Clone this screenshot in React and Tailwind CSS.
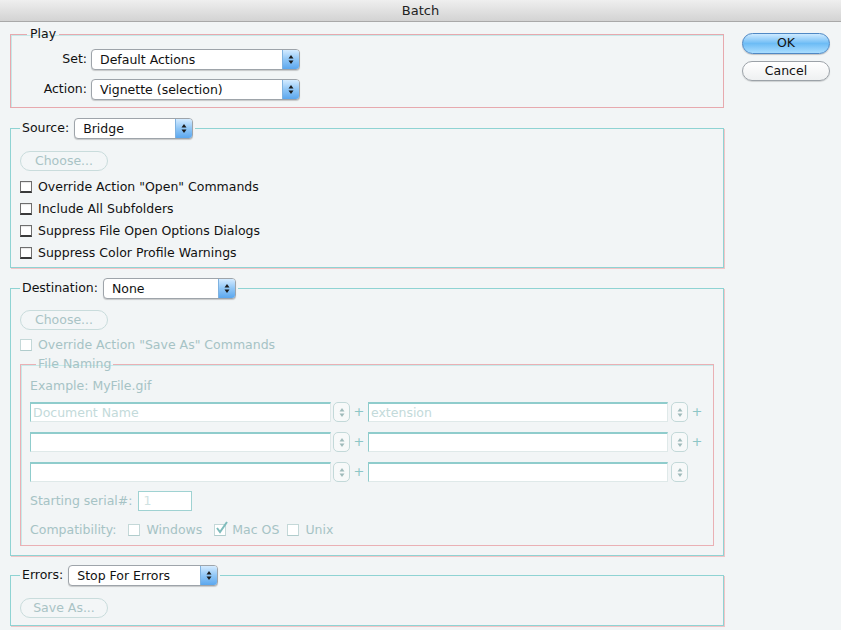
import React from 'react';

const FONT = { fontFamily: '"DejaVu Sans", "Liberation Sans", sans-serif' };

function Arrows({ color = '#1a1a1a' }) {
  return (
    <svg width="6" height="11" viewBox="0 0 6 11">
      <path d="M3 1 L5.5 4.5 L0.5 4.5 Z" fill={color} />
      <path d="M3 10 L5.5 6.5 L0.5 6.5 Z" fill={color} />
    </svg>
  );
}

function Select({ value, width }) {
  return (
    <div className={`flex h-[21px] ${width} overflow-hidden rounded-[4px] border border-[#9ea4aa] bg-white shadow-[0_1px_1px_rgba(0,0,0,0.18)]`}>
      <span className="flex-1 pl-[8px] text-[12.5px] leading-[19px] text-[#111]">{value}</span>
      <span className="flex w-[17px] items-center justify-center border-l border-[#7fb2e0] bg-gradient-to-b from-[#d4ebff] via-[#8fc6f6] to-[#5ba7ee]">
        <Arrows />
      </span>
    </div>
  );
}

function PillButton({ children, disabled, primary }) {
  if (primary) {
    return (
      <div className="flex h-[21px] w-[88px] items-center justify-center rounded-full border border-[#4f88c4] bg-gradient-to-b from-[#cdeaff] via-[#6dbcf5] to-[#a9ddff] text-[12.5px] text-[#111] shadow-[0_1px_1px_rgba(0,0,0,0.2)]">
        {children}
      </div>
    );
  }
  return (
    <div
      className={`flex h-[20px] w-[88px] items-center justify-center rounded-full border text-[12.5px] ${
        disabled
          ? 'border-[#c9dcdc] bg-[#f3f6f7] text-[#a9c3c5]'
          : 'border-[#9ca2a8] bg-gradient-to-b from-white to-[#eef0f1] text-[#111] shadow-[0_1px_1px_rgba(0,0,0,0.15)]'
      }`}
    >
      {children}
    </div>
  );
}

function Checkbox({ label, disabled, checked }) {
  return (
    <div className="flex h-[22px] items-center">
      <span
        className={`relative flex h-[12px] w-[12px] items-center justify-center border bg-white ${
          disabled
            ? 'border-[#c4d8d8] border-b-[#b0cccc]'
            : 'border-[#6e6e6e] border-b-[#3a3a3a] border-b-2 shadow-[inset_0_1px_1px_rgba(0,0,0,0.1)]'
        }`}
      >
        {checked && (
          <svg width="14" height="14" viewBox="0 0 14 14" className="absolute -top-[4px] left-[0px]">
            <path d="M2 7 L5 11 L12 1" fill="none" stroke="#7fbcbc" strokeWidth="2" />
          </svg>
        )}
      </span>
      <span className={`ml-[6px] text-[12.5px] ${disabled ? 'text-[#a6c3c5]' : 'text-[#111]'}`}>{label}</span>
    </div>
  );
}

function TextField({ width, placeholder }) {
  return (
    <div className={`h-[20px] ${width} border border-[#dfe9e9] border-l-[#8fcccc] border-t-[#8fcccc] border-t-2 bg-white pl-[2px] text-[12.5px] leading-[17px] text-[#c3dada]`}>
      {placeholder}
    </div>
  );
}

function Stepper() {
  return (
    <div className="flex h-[20px] w-[17px] items-center justify-center rounded-[5px] border border-[#c3d9d9] bg-[#f7f9f9]">
      <Arrows color="#9fbaba" />
    </div>
  );
}

function NamingRow({ first, second, plus = true }) {
  return (
    <div className="flex items-center">
      <TextField width="w-[301px]" placeholder={first} />
      <div className="ml-[2px]"><Stepper /></div>
      <span className="w-[18px] text-center text-[13px] text-[#8cc6c6]">+</span>
      <TextField width="w-[300px]" placeholder={second} />
      <div className="ml-[3px]"><Stepper /></div>
      {plus && <span className="w-[18px] text-center text-[13px] text-[#8cc6c6]">+</span>}
    </div>
  );
}

export default function App() {
  return (
    <div className="h-[630px] w-[841px] overflow-hidden bg-[#f2f5f6] text-[#111]" style={FONT}>
      <div className="flex h-[22px] items-center justify-center border-b border-[#a9a9a9] bg-gradient-to-b from-[#efefef] to-[#d3d3d3] text-[13px] text-[#222]">
        Batch
      </div>

      <div className="flex">
        <div className="ml-[10px] mt-[4px] w-[714px]">
          {/* Play */}
          <fieldset className="border border-[#e7a9ae] px-[9px] pb-[7px] shadow-[inset_1px_1px_0_#c5e9e9]">
            <legend className="ml-[7px] px-[3px] text-[12.5px] leading-[16px]">Play</legend>
            <div className="mt-[7px] grid grid-cols-[67px_209px] items-center gap-x-[4px] gap-y-[9px]">
              <span className="text-right text-[12.5px]">Set:</span>
              <Select value="Default Actions" width="w-[209px]" />
              <span className="text-right text-[12.5px]">Action:</span>
              <Select value="Vignette (selection)" width="w-[209px]" />
            </div>
          </fieldset>

          {/* Source */}
          <fieldset className="mt-[10px] border border-[#8fd3d3] px-[9px] pb-[3px] shadow-[1px_1px_0_#f2c4c6]">
            <legend className="flex items-center gap-[5px] px-[2px] text-[12.5px]">
              <span>Source:</span>
              <Select value="Bridge" width="w-[119px]" />
            </legend>
            <div className="mt-[12px]"><PillButton disabled>Choose...</PillButton></div>
            <div className="mt-[5px]">
              <Checkbox label={'Override Action "Open" Commands'} />
              <Checkbox label="Include All Subfolders" />
              <Checkbox label="Suppress File Open Options Dialogs" />
              <Checkbox label="Suppress Color Profile Warnings" />
            </div>
          </fieldset>

          {/* Destination */}
          <fieldset className="mt-[10px] border border-[#8fd3d3] px-[9px] pb-[9px] shadow-[1px_1px_0_#f2c4c6]">
            <legend className="flex items-center gap-[5px] px-[2px] text-[12.5px]">
              <span>Destination:</span>
              <Select value="None" width="w-[133px]" />
            </legend>
            <div className="mt-[11px]"><PillButton disabled>Choose...</PillButton></div>
            <div className="mt-[4px]">
              <Checkbox label={'Override Action "Save As" Commands'} disabled />
            </div>
            <fieldset className="border border-[#eab0b4] pb-[4px] pl-[9px] shadow-[inset_1px_1px_0_#c7eaea]">
              <legend className="ml-[6px] px-[2px] text-[12.5px] leading-[16px] text-[#a6c3c5]">File Naming</legend>
              <div className="mt-[6px] text-[12.5px] leading-[16px] text-[#a6c3c5]">Example: MyFile.gif</div>
              <div className="mt-[8px] flex flex-col gap-[10px]">
                <NamingRow first="Document Name" second="extension" />
                <NamingRow />
                <NamingRow plus={false} />
              </div>
              <div className="mt-[9px] flex items-center">
                <span className="text-[12.5px] text-[#a6c3c5]">Starting serial#:</span>
                <div className="ml-[6px] h-[20px] w-[54px] border border-[#9fd2d2] bg-white pl-[4px] text-[12.5px] leading-[18px] text-[#cfe2e2]">1</div>
              </div>
              <div className="mt-[8px] flex items-center">
                <span className="mr-[12px] text-[12.5px] text-[#a6c3c5]">Compatibility:</span>
                <Checkbox label="Windows" disabled />
                <div className="ml-[12px]"><Checkbox label="Mac OS" disabled checked /></div>
                <div className="ml-[8px]"><Checkbox label="Unix" disabled /></div>
              </div>
            </fieldset>
          </fieldset>

          {/* Errors */}
          <fieldset className="mt-[9px] border border-[#8fd3d3] px-[9px] pb-[7px] shadow-[1px_1px_0_#f2c4c6]">
            <legend className="flex items-center gap-[5px] px-[2px] text-[12.5px]">
              <span>Errors:</span>
              <Select value="Stop For Errors" width="w-[150px]" />
            </legend>
            <div className="mt-[12px]"><PillButton disabled>Save As...</PillButton></div>
          </fieldset>
        </div>

        <div className="ml-[18px] mt-[11px] flex flex-col gap-[7px]">
          <PillButton primary>OK</PillButton>
          <PillButton>Cancel</PillButton>
        </div>
      </div>
    </div>
  );
}
